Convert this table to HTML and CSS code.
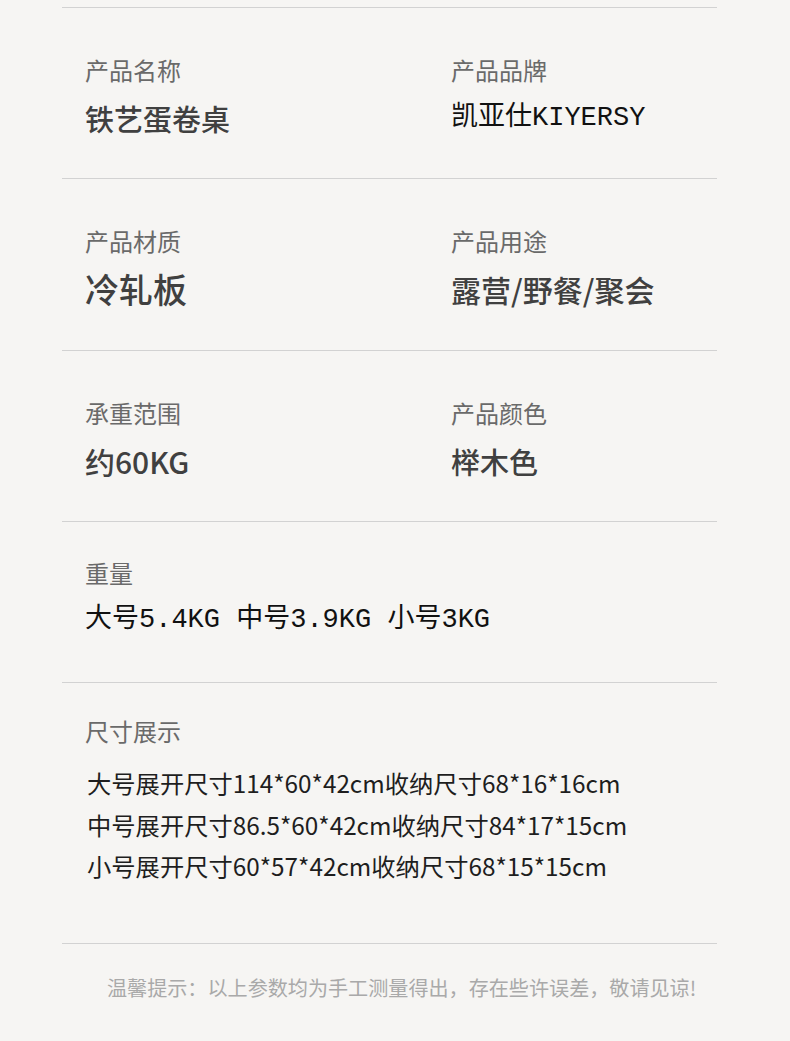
FILE: index.html
```html
<!DOCTYPE html>
<html lang="zh-CN">
<head>
<meta charset="utf-8">
<title>产品参数</title>
<link rel="stylesheet" href="styles.css">
</head>
<body>
<main class="sheet">
  <section class="row row--pair">
    <div class="cell">
      <p class="label">产品名称</p>
      <p class="value value--name">铁艺蛋卷桌</p>
    </div>
    <div class="cell">
      <p class="label">产品品牌</p>
      <p class="value value--mono">凯亚仕KIYERSY</p>
    </div>
  </section>
  <section class="row row--pair row--tall">
    <div class="cell">
      <p class="label">产品材质</p>
      <p class="value value--big">冷轧板</p>
    </div>
    <div class="cell">
      <p class="label">产品用途</p>
      <p class="value">露营/野餐/聚会</p>
    </div>
  </section>
  <section class="row row--pair">
    <div class="cell">
      <p class="label">承重范围</p>
      <p class="value">约60KG</p>
    </div>
    <div class="cell">
      <p class="label">产品颜色</p>
      <p class="value value--name">榉木色</p>
    </div>
  </section>
  <section class="row row--single">
    <div class="cell">
      <p class="label">重量</p>
      <p class="value value--mono">大号5.4KG 中号3.9KG 小号3KG</p>
    </div>
  </section>
  <section class="row row--sizes">
    <div class="cell">
      <p class="label">尺寸展示</p>
      <ul class="sizes">
        <li>大号展开尺寸114*60*42cm收纳尺寸68*16*16cm</li>
        <li>中号展开尺寸86.5*60*42cm收纳尺寸84*17*15cm</li>
        <li>小号展开尺寸60*57*42cm收纳尺寸68*15*15cm</li>
      </ul>
    </div>
  </section>
</main>
<p class="note">温馨提示：以上参数均为手工测量得出，存在些许误差，敬请见谅!</p>
</body>
</html>
```
FILE: styles.css
```css
html, body {
  margin: 0;
  padding: 0;
  background: #f6f5f3;
}

body {
  font-family: "Noto Sans CJK SC", "Noto Sans", sans-serif;
}

p, ul {
  margin: 0;
  padding: 0;
}

.sheet {
  margin-left: 62px;
  width: 655px;
  padding-top: 7px;
}

.row {
  border-top: 1px solid #d2d2d2;
  padding-left: 23px;
}

.row:last-child {
  border-bottom: 1px solid #d2d2d2;
}

.row--pair {
  display: grid;
  grid-template-columns: 366px 1fr;
  padding-top: 47px;
  padding-bottom: 40px;
}

.row--tall {
  padding-bottom: 41px;
}

.row--pair .value {
  margin-top: 13px;
}

.row--single {
  padding-top: 36px;
  padding-bottom: 42px;
}

.row--single .value {
  margin-top: 12px;
}

.row--sizes {
  padding-top: 33px;
  padding-bottom: 56px;
}

.label {
  font-size: 24px;
  line-height: 30px;
  color: #6a6a6a;
  font-weight: 400;
}

.value {
  font-size: 30px;
  line-height: 40px;
  color: #404040;
  font-weight: 500;
}

.value--name {
  font-size: 29px;
}

.value--big {
  font-size: 34px;
}

.value--mono {
  font-family: "Liberation Mono", "Noto Sans CJK SC", monospace;
  font-size: 27px;
  color: #111;
  font-weight: 400;
}

.sizes {
  list-style: none;
  margin-top: 16px;
  padding-left: 2px;
  font-size: 24.3px;
  line-height: 41.5px;
  color: #1e1e1e;
}

.note {
  padding-left: 107px;
  padding-top: 30px;
  font-size: 20.1px;
  line-height: 28px;
  color: #a9a9a9;
}
```
